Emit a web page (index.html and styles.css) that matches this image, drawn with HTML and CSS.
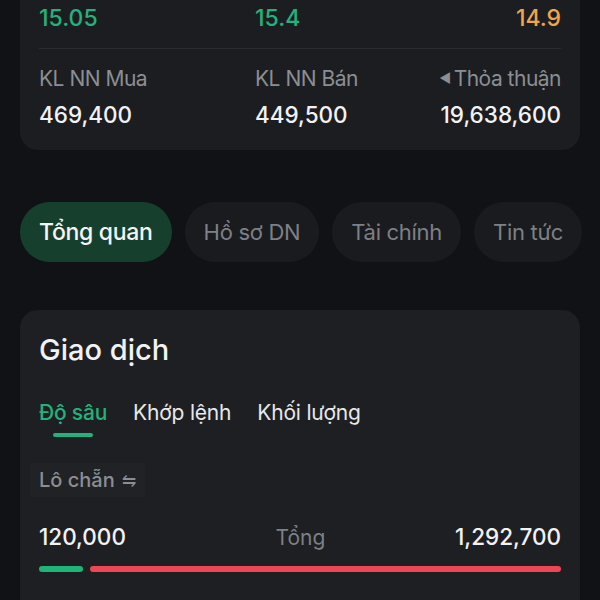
FILE: index.html
```html
<!DOCTYPE html>
<html lang="vi">
  <head>
    <meta charset="UTF-8" />
    <meta name="viewport" content="width=device-width, initial-scale=1.0" />
    <title>Chi tiết cổ phiếu</title>
    <link rel="stylesheet" href="styles.css">
  </head>
  <body>
    <div class="page">
      <!-- Thống kê giá / khối ngoại -->
      <div class="summary">
        <div class="grid">
          <span class="price up">15.05</span>
          <span class="price up">15.4</span>
          <span class="price ref right">14.9</span>
        </div>
        <hr class="divider" />
        <div class="grid">
          <span class="label">KL NN Mua</span>
          <span class="label">KL NN Bán</span>
          <span class="label right"><span class="caret">&#9664;</span>Thỏa thuận</span>
          <span class="value">469,400</span>
          <span class="value">449,500</span>
          <span class="value right">19,638,600</span>
        </div>
      </div>

      <!-- Menu chính -->
      <div class="pills">
        <span class="pill active">Tổng quan</span>
        <span class="pill">Hồ sơ DN</span>
        <span class="pill">Tài chính</span>
        <span class="pill">Tin tức</span>
      </div>

      <!-- Giao dịch -->
      <div class="card">
        <h2>Giao dịch</h2>
        <div class="tabs">
          <span class="tab active">Độ sâu</span>
          <span class="tab">Khớp lệnh</span>
          <span class="tab">Khối lượng</span>
        </div>
        <div class="lot">Lô chẵn <span class="swap">&#8651;</span></div>
        <div class="totals">
          <span class="value">120,000</span>
          <span class="total-label">Tổng</span>
          <span class="value">1,292,700</span>
        </div>
        <div class="ratio">
          <div class="buy" style="width: 8.5%"></div>
          <div class="sell"></div>
        </div>
      </div>
    </div>
  </body>
</html>
```

FILE: styles.css
```css
body {
  background-color: #111215;
  font-family: Inter, "Noto Sans", sans-serif;
  color: #f2f2f3;
  margin: 0;
  padding: 0;
  height: 600px;
  overflow: hidden;
}

.page {
  padding: 0 20px;
}

.summary {
  background-color: #1c1d20;
  border-radius: 0 0 18px 18px;
  padding: 4px 19px 21px;
}

.grid {
  display: grid;
  grid-template-columns: 216px 1fr 1fr;
  row-gap: 8px;
}

.right {
  justify-self: end;
}

.price {
  font-size: 23px;
  line-height: 28px;
  font-weight: 500;
}

.up {
  color: #23b27b;
}

.ref {
  color: #f0a44b;
}

.divider {
  border: none;
  height: 1px;
  background-color: #2a2b2f;
  margin: 16px 0;
}

.label {
  font-size: 21px;
  line-height: 28px;
  color: #8b8e93;
  letter-spacing: -0.5px;
}

.caret {
  font-size: 13px;
  line-height: 1;
  vertical-align: 3px;
  margin-right: 3px;
}

.value {
  font-size: 22.5px;
  line-height: 28px;
  font-weight: 500;
  color: #f2f2f3;
}

.pills {
  display: flex;
  gap: 13px;
  margin: 52px -20px 0 0;
  overflow: hidden;
  white-space: nowrap;
}

.pill {
  flex-shrink: 0;
  height: 60px;
  line-height: 60px;
  padding: 0 19px;
  border-radius: 30px;
  font-size: 22px;
  color: #7d8086;
  background-color: #1a1b1e;
  letter-spacing: -0.3px;
}

.pill.active {
  background-color: #173f2e;
  color: #f4f4f4;
  font-weight: 500;
  font-size: 23px;
}

.card {
  background-color: #1e1f22;
  border-radius: 18px 18px 0 0;
  margin-top: 48px;
  padding: 24px 19px 28px;
}

h2 {
  margin: 0;
  font-size: 29px;
  line-height: 32px;
  font-weight: 500;
}

.tabs {
  display: flex;
  gap: 26px;
  margin-top: 33px;
}

.tab {
  position: relative;
  font-size: 21px;
  line-height: 28px;
  color: #e8e8e9;
  padding-bottom: 10px;
  letter-spacing: -0.2px;
}

.tab.active {
  color: #23b27b;
  font-weight: 500;
}

.tab.active::after {
  content: "";
  position: absolute;
  left: 50%;
  bottom: 0;
  width: 40px;
  height: 4px;
  margin-left: -20px;
  border-radius: 2px;
  background-color: #23b27b;
}

.lot {
  display: inline-block;
  margin: 26px 0 0 -9px;
  padding: 0 9px;
  height: 34px;
  line-height: 34px;
  background-color: #212225;
  color: #8b8e93;
  font-size: 20px;
  font-weight: 500;
}

.swap {
  font-size: 17px;
  margin-left: 2px;
}

.totals {
  display: flex;
  justify-content: space-between;
  align-items: center;
  margin-top: 26px;
}

.total-label {
  font-size: 21px;
  color: #7d8086;
  margin-left: 20px;
}

.ratio {
  display: flex;
  gap: 7px;
  margin-top: 15px;
}

.buy,
.sell {
  height: 6px;
  border-radius: 3px;
}

.buy {
  background-color: #1fb478;
}

.sell {
  flex: 1;
  background-color: #ef4656;
}
```
